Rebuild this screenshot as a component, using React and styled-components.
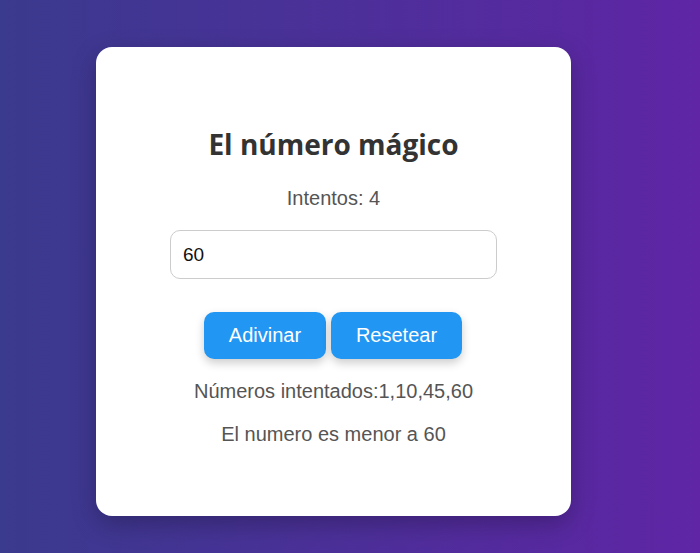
import React from "react";
import styled, { createGlobalStyle } from "styled-components";

const Global = createGlobalStyle`
  html, body { margin: 0; padding: 0; }
  body {
    width: 700px;
    height: 553px;
    overflow: hidden;
    background: linear-gradient(to right, #3a3a8e, #5f25a5);
    font-family: "Liberation Sans", Arial, sans-serif;
  }
`;

const Page = styled.div`
  padding: 47px 0 0 96px;
`;

const Card = styled.div`
  width: 475px;
  height: 469px;
  box-sizing: border-box;
  background: #fff;
  border-radius: 16px;
  box-shadow: 0 8px 24px rgba(0, 0, 0, 0.25);
  display: flex;
  flex-direction: column;
  align-items: center;
  padding-top: 79px;
`;

const Title = styled.h1`
  margin: 0;
  font-family: "Open Sans", "Noto Sans", sans-serif;
  font-weight: 700;
  font-size: 28px;
  line-height: 36px;
  color: #333;
`;

const Text = styled.p`
  margin: ${(p) => p.$mt || 0}px 0 0;
  font-size: 20px;
  line-height: 22px;
  color: #555;
`;

const Input = styled.input`
  margin-top: 21px;
  width: 327px;
  height: 49px;
  box-sizing: border-box;
  border: 1px solid #ccc;
  border-radius: 10px;
  padding: 0 12px;
  font-family: "Liberation Sans", Arial, sans-serif;
  font-size: 19px;
  color: #111;
  outline: none;
`;

const Buttons = styled.div`
  margin-top: 33px;
  margin-right: 1px;
  display: flex;
  gap: 5px;
`;

const Button = styled.button`
  height: 47px;
  width: ${(p) => p.$w}px;
  border: none;
  border-radius: 10px;
  background: #2196f3;
  color: #fff;
  font-family: "Liberation Sans", Arial, sans-serif;
  font-size: 20px;
  box-shadow: 0 4px 10px rgba(0, 0, 0, 0.2);
  cursor: pointer;
`;

export default function App() {
  return (
    <>
      <Global />
      <Page>
        <Card>
          <Title>El número mágico</Title>
          <Text $mt={25}>Intentos: 4</Text>
          <Input defaultValue="60" autoFocus />
          <Buttons>
            <Button $w={122}>Adivinar</Button>
            <Button $w={131}>Resetear</Button>
          </Buttons>
          <Text $mt={21}>Números intentados:1,10,45,60</Text>
          <Text $mt={21}>El numero es menor a 60</Text>
        </Card>
      </Page>
    </>
  );
}
